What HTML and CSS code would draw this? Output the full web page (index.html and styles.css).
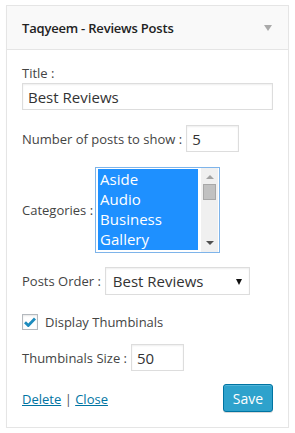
FILE: index.html
```html
<!DOCTYPE html>
<html>
<head>
	<title>Taqyeem - Reviews Posts</title>
	<meta charset="utf-8">
	<link rel="stylesheet" href="styles.css">
</head>
<body>
<div class="widget">
	<!-- 标题栏 -->
	<div class="widget-top">
		<h3>Taqyeem - Reviews Posts</h3>
		<span class="toggle"></span>
	</div>

	<!-- 表单区 -->
	<div class="widget-inside">
		<p class="field-title">Title :</p>
		<input class="txt wide" type="text" value="Best Reviews">

		<div class="row row-num">
			<label>Number of posts to show :</label>
			<input class="txt small" type="text" value="5">
		</div>

		<div class="row row-cats">
			<label>Categories :</label>
			<div class="listbox">
				<ul>
					<li>Aside</li>
					<li>Audio</li>
					<li>Business</li>
					<li>Gallery</li>
				</ul>
				<div class="scroll">
					<span class="up"></span>
					<span class="thumb"></span>
					<span class="down"></span>
				</div>
			</div>
		</div>

		<div class="row row-order">
			<label>Posts Order :</label>
			<div class="select">Best Reviews<span class="caret"></span></div>
		</div>

		<div class="row row-check">
			<span class="checkbox">
				<svg width="12" height="10" viewBox="0 0 12 10"><path d="M1 5.2 L4.3 8.5 L11 1.5" fill="none" stroke="#1e8cbe" stroke-width="2.8"/></svg>
			</span>
			<label>Display Thumbinals</label>
		</div>

		<div class="row row-size">
			<label>Thumbinals Size :</label>
			<input class="txt small" type="text" value="50">
		</div>

		<div class="actions">
			<div class="links"><a href="javascript:;">Delete</a> | <a href="javascript:;">Close</a></div>
			<input class="btn" type="button" value="Save">
		</div>
	</div>
</div>
</body>
</html>
```

FILE: styles.css
```css
body, ul, li, h3, p { margin: 0; padding: 0; }
ul { list-style: none; }
body { background-color: #fff; padding: 5px 0 0 6px; font-family: "Open Sans", "Liberation Sans", sans-serif; font-size: 13px; color: #444; }
a { color: #0074a2; text-decoration: underline; }

.widget { width: 281px; height: 421px; border: 1px solid #e5e5e5; box-shadow: 0 1px 1px rgba(0,0,0,.04); background-color: #fff; }
.widget-top { display: flex; align-items: center; justify-content: space-between; height: 43px; padding: 0 16px 0 15px; background-color: #f9f9f9; border-bottom: 1px solid #e5e5e5; }
.widget-top h3 { font-size: 13px; font-weight: 600; color: #222; letter-spacing: -0.2px; }
.toggle { width: 0; height: 0; border-left: 4px solid transparent; border-right: 4px solid transparent; border-top: 6px solid #aaa; margin-top: 1px; }

.widget-inside { padding: 14px 15px 0 15px; }
.field-title { line-height: 18px; margin-bottom: 1px; }

.txt { display: block; box-sizing: border-box; height: 27px; padding: 0 5px; border: 1px solid #ddd; background-color: #fff; font-family: inherit; font-size: 15px; color: #333; outline: none; box-shadow: inset 0 1px 2px rgba(0,0,0,.07); }
.wide { width: 251px; }
.small { width: 53px; }

.row { display: flex; align-items: center; }
.row label { margin-right: 4px; }
.row-cats label { margin-right: 2px; }
.row-num { margin-top: 15px; }
.row-cats { margin-top: 15px; }
.row-order { margin-top: 14px; }
.row-check { margin-top: 18px; }
.row-size { margin-top: 13px; }

.listbox { display: flex; box-sizing: border-box; width: 125px; height: 86px; padding: 1px 1px 2px 2px; border: 1px solid #7eb4ea; background-color: #fff; }
.listbox ul { flex: 1; margin-right: 3px; background-color: #1e90ff; }
.listbox li { height: 20px; line-height: 20px; padding-left: 2px; font-size: 15px; color: #fff; }
.scroll { display: flex; flex-direction: column; align-items: center; width: 17px; margin-top: -1px; margin-bottom: -2px; background-color: #f0f0f0; }
.scroll .up, .scroll .down { width: 0; height: 0; border-left: 4px solid transparent; border-right: 4px solid transparent; }
.scroll .up { margin-top: 7px; border-bottom: 4px solid #a3a3a3; }
.scroll .down { margin-top: auto; margin-bottom: 7px; border-top: 4px solid #505050; }
.scroll .thumb { width: 13px; height: 16px; margin-top: 5px; background-color: #c1c1c1; border: 1px solid #a8a8a8; box-sizing: border-box; }

.select { position: relative; box-sizing: border-box; width: 145px; height: 28px; line-height: 26px; padding-left: 7px; border: 1px solid #ddd; font-size: 15px; color: #333; box-shadow: inset 0 1px 2px rgba(0,0,0,.07); }
.caret { position: absolute; right: 7px; top: 11px; width: 0; height: 0; border-left: 3px solid transparent; border-right: 3px solid transparent; border-top: 6px solid #111; }

.checkbox { display: flex; align-items: center; justify-content: center; box-sizing: border-box; width: 16px; height: 16px; margin-right: 7px; border: 1px solid #b4b9be; background-color: #fff; box-shadow: inset 0 1px 2px rgba(0,0,0,.1); }

.actions { display: flex; justify-content: space-between; align-items: flex-start; margin-top: 13px; }
.links { margin-top: 6px; color: #555; }
.btn { box-sizing: border-box; width: 50px; height: 28px; padding: 0; border: 1px solid #0074a2; border-radius: 3px; background-color: #2ea2cc; color: #fff; font-family: inherit; font-size: 14px; box-shadow: inset 0 1px 0 rgba(120,200,230,.5), 0 1px 0 rgba(0,0,0,.15); }
```
